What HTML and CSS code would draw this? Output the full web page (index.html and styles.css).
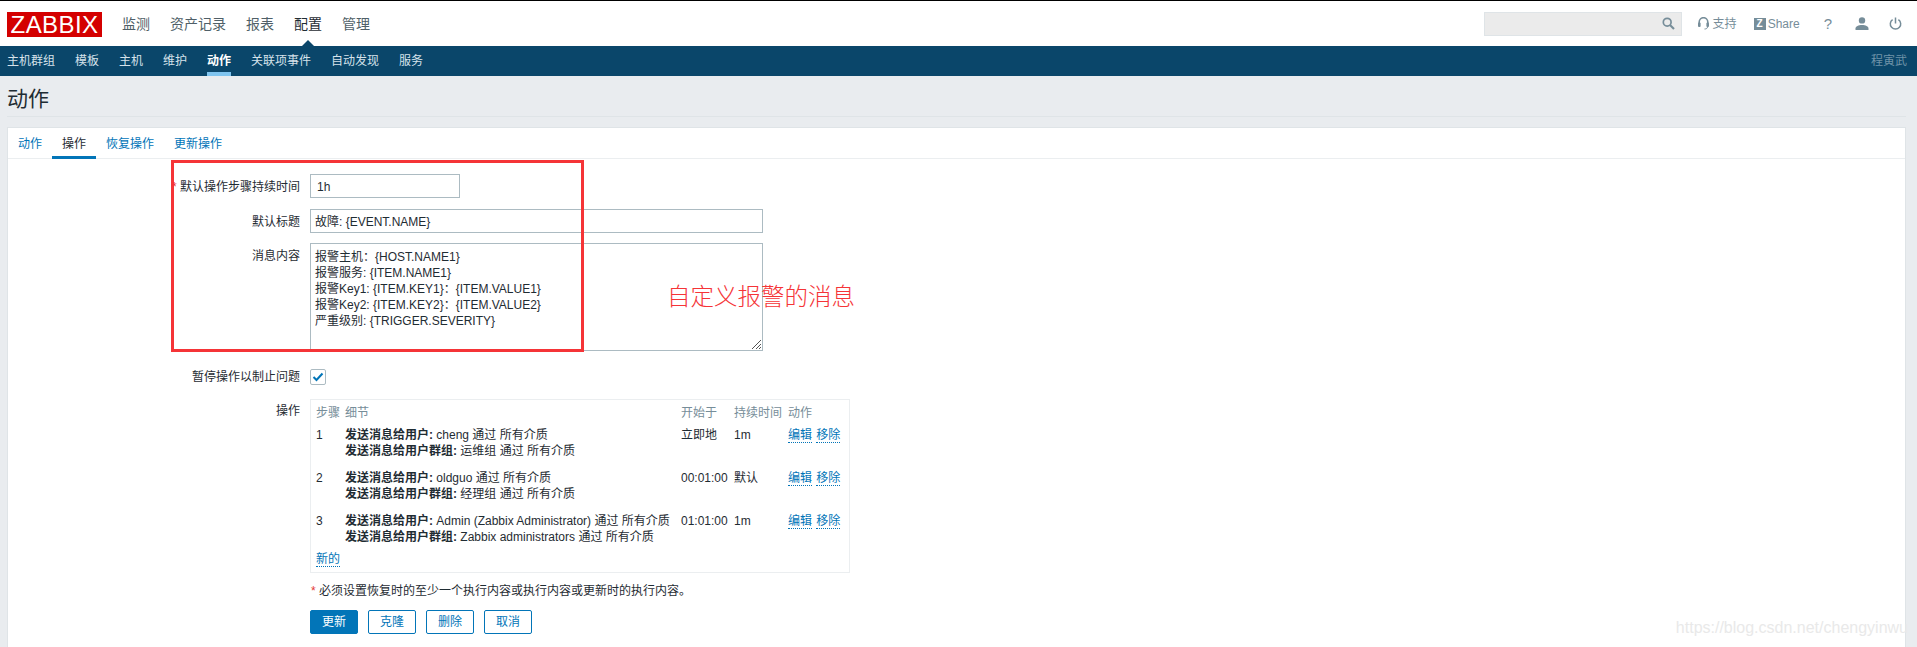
FILE: index.html
```html
<!DOCTYPE html>
<html lang="zh-CN">

<head>
    <meta charset="UTF-8">
    <title>动作</title>
    <link rel="stylesheet" href="styles.css">
</head>

<body>
    <header class="top">
        <div class="logo">ZABBIX</div>
        <nav class="menu">
            <a>监测</a>
            <a>资产记录</a>
            <a>报表</a>
            <a class="on">配置</a>
            <a>管理</a>
        </nav>
        <div class="tools">
            <div class="search">
                <svg width="13" height="13" viewBox="0 0 13 13"><circle cx="5.2" cy="5.2" r="3.9" fill="none" stroke="#768d99" stroke-width="1.7"/><path d="M8 8l4 4" stroke="#768d99" stroke-width="2.2"/></svg>
            </div>
            <a class="tool support">
                <svg width="11" height="13" viewBox="0 0 11 13"><path d="M1.2 7V5a4.3 4.3 0 0 1 8.6 0v2" fill="none" stroke="#768d99" stroke-width="1.6"/><rect x="0" y="5.5" width="2.6" height="4.5" rx="1" fill="#768d99"/><rect x="8.4" y="5.5" width="2.6" height="4.5" rx="1" fill="#768d99"/><path d="M9.5 10c0 1.4-1.2 2-3 2" fill="none" stroke="#768d99"/></svg>
                支持
            </a>
            <a class="tool share"><span class="zbox">Z</span>Share</a>
            <a class="tool help">?</a>
            <a class="tool">
                <svg width="14" height="13" viewBox="0 0 14 13"><circle cx="7" cy="3.4" r="3.2" fill="#768d99"/><path d="M0.5 13v-1.6c0-2 3-3.4 6.500-3.400s6.500 1.400 6.500 3.400V13z" fill="#768d99"/></svg>
            </a>
            <a class="tool">
                <svg width="13" height="13" viewBox="0 0 13 13"><path d="M3.6 2.6a5.200 5.200 0 1 0 5.800 0" fill="none" stroke="#768d99" stroke-width="1.500"/><path d="M6.500 0.500v6" stroke="#768d99" stroke-width="1.500"/></svg>
            </a>
        </div>
    </header>

    <nav class="sub">
        <a>主机群组</a>
        <a>模板</a>
        <a>主机</a>
        <a>维护</a>
        <a class="on">动作</a>
        <a>关联项事件</a>
        <a>自动发现</a>
        <a>服务</a>
        <span class="who">程寅武</span>
    </nav>

    <main class="page">
        <h1 class="title">动作</h1>

        <section class="card">
            <div class="tabs">
                <a>动作</a>
                <a class="on">操作</a>
                <a>恢复操作</a>
                <a>更新操作</a>
            </div>

            <form class="form">
                <div class="row first">
                    <label class="lbl"><span class="req">*</span> 默认操作步骤持续时间</label>
                    <div class="inp short">1h</div>
                </div>
                <div class="row">
                    <label class="lbl">默认标题</label>
                    <div class="inp wide">故障: {EVENT.NAME}</div>
                </div>
                <div class="row">
                    <label class="lbl">消息内容</label>
                    <div class="inp wide area">报警主机：{HOST.NAME1}
报警服务: {ITEM.NAME1}
报警Key1: {ITEM.KEY1}：{ITEM.VALUE1}
报警Key2: {ITEM.KEY2}：{ITEM.VALUE2}
严重级别: {TRIGGER.SEVERITY}
                        <svg class="grip" width="9" height="9" viewBox="0 0 9 9"><path d="M0 9l9-9M4 9l5-5M7 9l2-2" stroke="#555" stroke-width="1"/></svg>
                    </div>
                </div>
                <div class="row check-row">
                    <label class="lbl">暂停操作以制止问题</label>
                    <div class="check">
                        <svg width="12" height="10" viewBox="0 0 12 10"><path d="M1.500 5l3 3 6-6.500" fill="none" stroke="#0275b8" stroke-width="2"/></svg>
                    </div>
                </div>
                <div class="row ops-row">
                    <label class="lbl">操作</label>
                    <div class="ops">
                        <table>
                            <tr class="head">
                                <td class="c-step">步骤</td>
                                <td class="c-detail">细节</td>
                                <td class="c-start">开始于</td>
                                <td class="c-dur">持续时间</td>
                                <td class="c-act">动作</td>
                            </tr>
                            <tr>
                                <td>1</td>
                                <td><b>发送消息给用户:</b> cheng 通过 所有介质<br><b>发送消息给用户群组:</b> 运维组 通过 所有介质</td>
                                <td>立即地</td>
                                <td>1m</td>
                                <td class="c-act"><a class="dot">编辑</a> <a class="dot">移除</a></td>
                            </tr>
                            <tr>
                                <td>2</td>
                                <td><b>发送消息给用户:</b> oldguo 通过 所有介质<br><b>发送消息给用户群组:</b> 经理组 通过 所有介质</td>
                                <td>00:01:00</td>
                                <td>默认</td>
                                <td class="c-act"><a class="dot">编辑</a> <a class="dot">移除</a></td>
                            </tr>
                            <tr>
                                <td>3</td>
                                <td><b>发送消息给用户:</b> Admin (Zabbix Administrator) 通过 所有介质<br><b>发送消息给用户群组:</b> Zabbix administrators 通过 所有介质</td>
                                <td>01:01:00</td>
                                <td>1m</td>
                                <td class="c-act"><a class="dot">编辑</a> <a class="dot">移除</a></td>
                            </tr>
                        </table>
                        <a class="dot new">新的</a>
                    </div>
                </div>
                <p class="note"><span class="req">*</span> 必须设置恢复时的至少一个执行内容或执行内容或更新时的执行内容。</p>
                <div class="btns">
                    <a class="btn main">更新</a>
                    <a class="btn">克隆</a>
                    <a class="btn">删除</a>
                    <a class="btn">取消</a>
                </div>
            </form>

            <!-- 截图上的红框标注 -->
            <div class="mark"></div>
            <div class="mark-text">自定义报警的消息</div>
        </section>
    </main>

    <div class="watermark">https://blog.csdn.net/chengyinwu</div>
</body>

</html>
```

FILE: styles.css
```css
* {
    padding: 0;
    margin: 0;
    box-sizing: border-box;
}

html,
body {
    height: 647px;
    overflow: hidden;
}

body {
    position: relative;
    background-color: #e9ecef;
    color: #1f2c33;
    font: 12px/16px "Liberation Sans", "Noto Sans CJK SC", sans-serif;
}

a {
    color: inherit;
    text-decoration: none;
}

/* top bar */
.top {
    height: 46px;
    display: flex;
    align-items: center;
    padding-left: 7px;
    background-color: #fff;
    border-top: 1px solid #000;
}

.logo {
    width: 95px;
    height: 25px;
    margin-top: 1px;
    background-color: #d40000;
    color: #fff;
    font-size: 24px;
    line-height: 25px;
    letter-spacing: 0.4px;
    text-align: center;
}

.menu {
    display: flex;
    gap: 20px;
    margin-left: 20px;
    font-size: 14px;
    color: #4f5f68;
}

.menu .on {
    position: relative;
    color: #1f2c33;
}

.menu .on::after {
    content: "";
    position: absolute;
    left: 6px;
    top: 24px;
    border: 8px solid transparent;
    border-top-width: 0;
    border-bottom-color: #0a466a;
}

.tools {
    display: flex;
    align-items: center;
    margin-left: auto;
    color: #768d99;
}

.search {
    display: flex;
    align-items: center;
    justify-content: flex-end;
    width: 198px;
    height: 24px;
    padding-right: 6px;
    background-color: #ebebeb;
    border: 1px solid #dfe4e7;
}

.tool {
    display: flex;
    align-items: center;
    height: 24px;
}

.support {
    gap: 4px;
    margin-left: 16px;
}

.share {
    gap: 2px;
    margin-left: 17px;
}

.zbox {
    width: 12px;
    height: 12px;
    background-color: #768d99;
    color: #fff;
    font-size: 10px;
    font-weight: bold;
    line-height: 12px;
    text-align: center;
}

.help {
    margin-left: 24px;
    font-size: 15px;
}

.help + .tool {
    margin-left: 23px;
}

.help + .tool + .tool {
    margin-left: 20px;
    margin-right: 15px;
}

/* second nav */
.sub {
    height: 30px;
    display: flex;
    gap: 20px;
    padding-left: 7px;
    background-color: #0a466a;
    color: #d6e2ea;
    line-height: 30px;
}

.sub .on {
    color: #fff;
    font-weight: bold;
    border-bottom: 4px solid #7fc4ef;
}

.who {
    margin-left: auto;
    margin-right: 10px;
    color: #6f93a8;
}

/* content */
.page {
    padding: 0 11px 0 7px;
}

.title {
    height: 41px;
    font-size: 21px;
    font-weight: normal;
    line-height: 46px;
    border-bottom: 1px solid #dfe4e7;
    color: #1f2c33;
}

.card {
    position: relative;
    height: 530px;
    margin-top: 10px;
    background-color: #fff;
    border: 1px solid #dfe4e7;
}

.tabs {
    display: flex;
    height: 31px;
    border-bottom: 1px solid #ebeef0;
    color: #0275b8;
    line-height: 32px;
}

.tabs a {
    padding: 0 10px;
}

.tabs .on {
    height: 31px;
    color: #1f2c33;
    border-bottom: 3px solid #0275b8;
}

.form {
    padding-top: 15px;
}

.row {
    display: flex;
    align-items: flex-start;
    gap: 10px;
    margin-bottom: 10px;
}

.first {
    margin-bottom: 11px;
}

.lbl {
    width: 292px;
    padding-top: 5px;
    text-align: right;
    color: #1f2c33;
}

.req {
    color: #e33734;
}

.inp {
    height: 24px;
    padding: 4px 4px;
    border: 1px solid #acbbc2;
    color: #1f2c33;
}

.short {
    width: 150px;
    padding-left: 6px;
}

.wide {
    width: 453px;
}

.area {
    position: relative;
    height: 108px;
    padding-top: 5px;
    white-space: pre-line;
}

.grip {
    position: absolute;
    right: 1px;
    bottom: 1px;
}

.check-row {
    margin-top: 18px;
    margin-bottom: 14px;
    align-items: center;
}

.check-row .lbl {
    padding-top: 0;
}

.check {
    display: flex;
    align-items: center;
    justify-content: center;
    width: 16px;
    height: 16px;
    border: 1px solid #acbbc2;
    border-radius: 2px;
}

.ops-row {
    margin-bottom: 0;
}

.ops-row .lbl {
    padding-top: 4px;
}

.ops {
    width: 540px;
    height: 174px;
    padding: 5px 5px 0;
    border: 1px solid #ebeef0;
}

.ops table {
    border-collapse: collapse;
}

.ops td {
    padding: 0 0 11px;
    vertical-align: top;
}

.head td {
    padding-bottom: 6px;
    color: #768d99;
}

.c-step {
    width: 29px;
}

.c-detail {
    width: 336px;
}

.c-start {
    width: 53px;
}

.c-dur {
    width: 54px;
}

.ops .c-act {
    white-space: nowrap;
}

.dot {
    color: #0275b8;
    border-bottom: 1px dotted #0275b8;
}

.ops td .dot + .dot {
    margin-left: 1px;
}

.new {
    position: relative;
    top: -5px;
}

.note {
    margin: 10px 0 0 303px;
    height: 16px;
}

.btns {
    display: flex;
    gap: 10px;
    margin: 11px 0 0 302px;
}

.btn {
    width: 48px;
    height: 24px;
    border: 1px solid #0275b8;
    border-radius: 2px;
    color: #0275b8;
    line-height: 22px;
    text-align: center;
}

.main {
    background-color: #0275b8;
    color: #fff;
}

/* annotation over the form */
.mark {
    position: absolute;
    left: 163px;
    top: 32px;
    width: 413px;
    height: 192px;
    border: 3px solid #f53437;
}

.mark-text {
    position: absolute;
    left: 659px;
    top: 154px;
    color: #f53437;
    font-size: 23.5px;
    font-weight: 300;
    line-height: 30px;
    white-space: nowrap;
}

.watermark {
    position: absolute;
    right: 9px;
    top: 618px;
    color: #e9e9e9;
    font-size: 16px;
    line-height: 20px;
}
```
